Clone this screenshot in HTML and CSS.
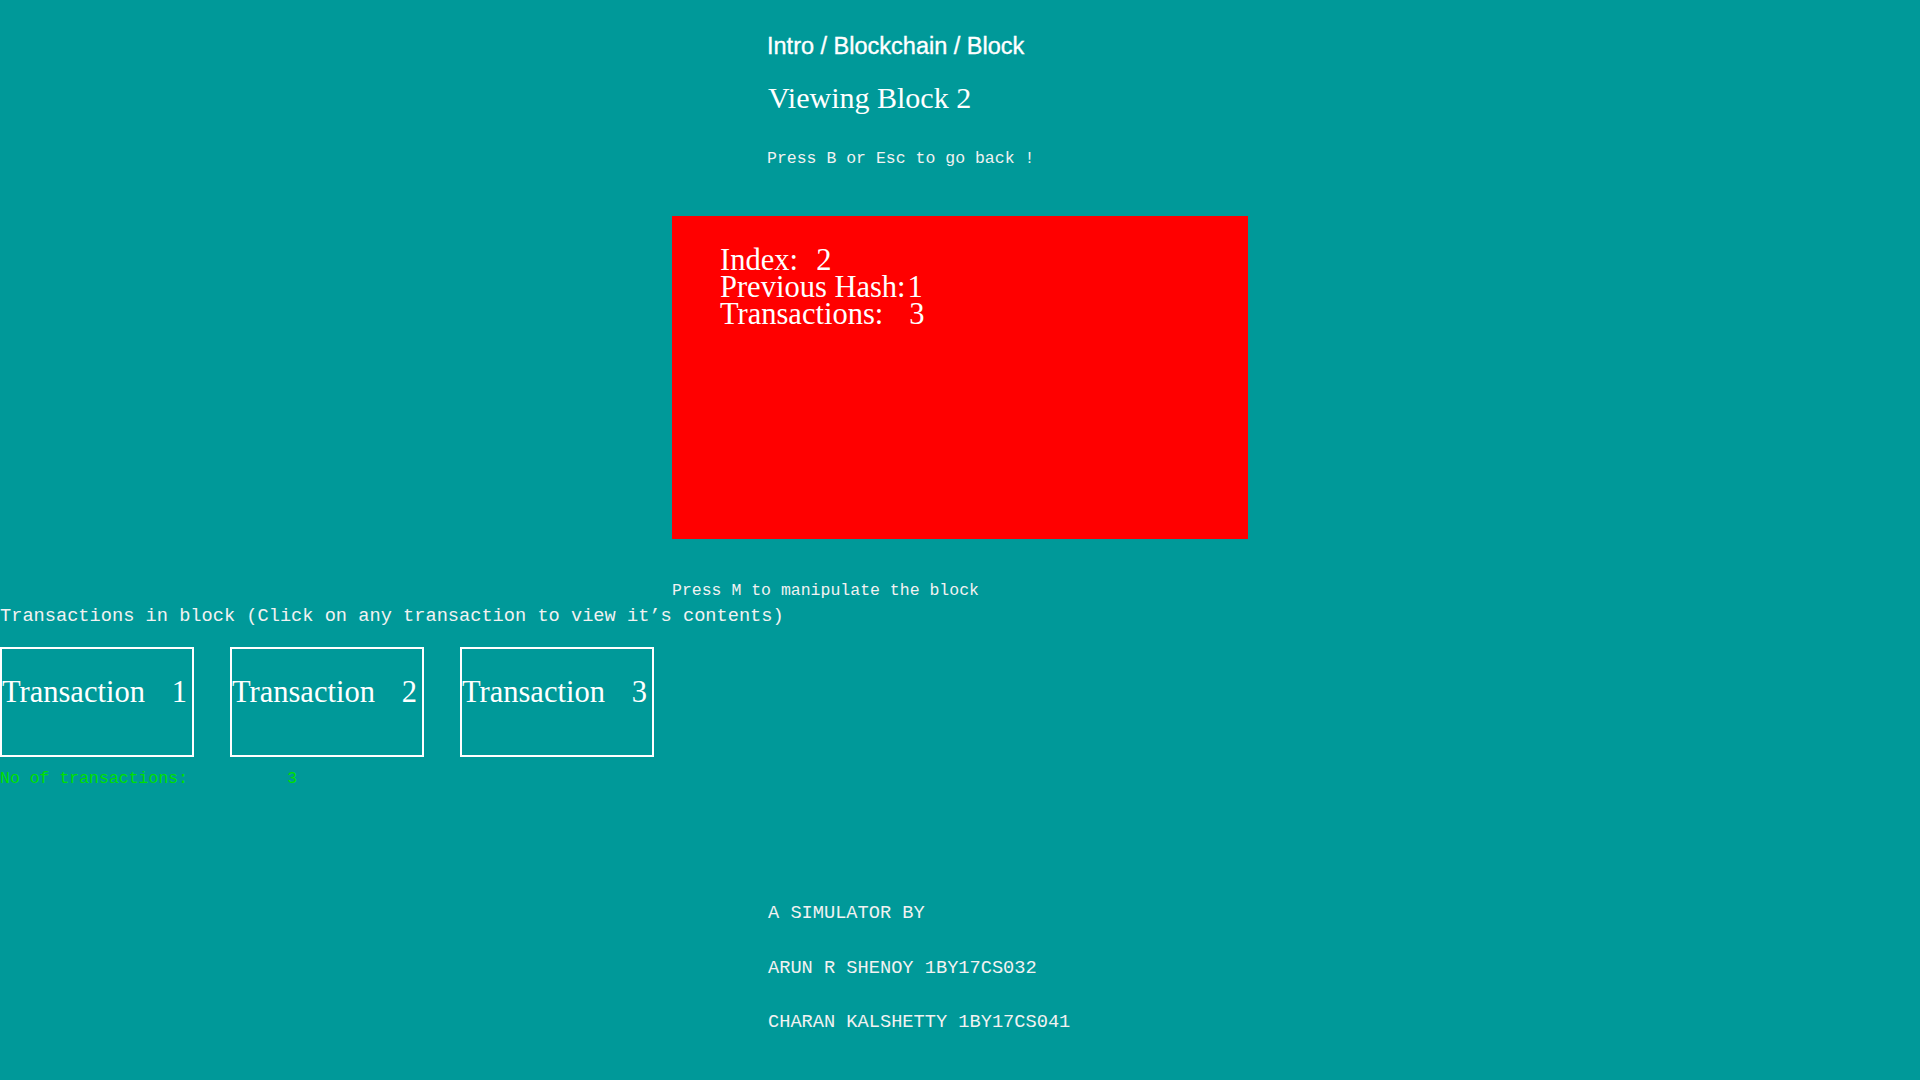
FILE: index.html
```html
<!DOCTYPE html>
<html lang="en">
<head>
<meta charset="utf-8">
<title>Viewing Block 2</title>
<link rel="stylesheet" href="styles.css">
</head>
<body>
<div class="screen">
  <header class="top">
    <div class="crumbs">Intro / Blockchain / Block</div>
    <h1 class="title">Viewing Block 2</h1>
    <p class="hint">Press B or Esc to go back !</p>
  </header>

  <section class="block-wrap">
    <div class="block-card">
      <div class="block-line">Index:  <span class="val-gap">2</span></div>
      <div class="block-line">Previous Hash:<span class="val-hash">1</span></div>
      <div class="block-line">Transactions:   <span class="val-gap">3</span></div>
    </div>
    <p class="hint manip">Press M to manipulate the block</p>
  </section>

  <p class="big-mono tx-caption">Transactions in block (Click on any transaction to view it’s contents)</p>

  <div class="tx-row">
    <div class="tx-box"><span>Transaction</span><span>1</span></div>
    <div class="tx-box"><span>Transaction</span><span>2</span></div>
    <div class="tx-box"><span>Transaction</span><span>3</span></div>
  </div>

  <p class="hint count">No of transactions:          3</p>

  <footer class="credits">
    <p class="big-mono credit first">A SIMULATOR BY</p>
    <p class="big-mono credit">ARUN R SHENOY 1BY17CS032</p>
    <p class="big-mono credit">CHARAN KALSHETTY 1BY17CS041</p>
  </footer>
</div>
</body>
</html>
```

FILE: styles.css
```css
html, body {
  margin: 0;
  padding: 0;
  background: #009999;
}

.screen {
  width: 1920px;
  height: 1080px;
  overflow: hidden;
  color: #ffffff;
}

p, h1 {
  margin: 0;
}

.top {
  padding-top: 31px;
  padding-left: 767px;
}

.crumbs {
  font-family: "Liberation Sans", Arial, sans-serif;
  font-size: 23.5px;
  line-height: 30px;
  color: #ffffff;
  -webkit-text-stroke: 0.35px #ffffff;
}

.title {
  margin-top: 19px;
  font-family: "Liberation Serif", "Times New Roman", serif;
  font-weight: normal;
  font-size: 30px;
  line-height: 36px;
  padding-left: 1px;
}

.hint {
  font-family: "Liberation Mono", "Courier New", monospace;
  font-size: 16.5px;
  line-height: 20px;
  color: #f2f2f2;
  white-space: pre;
}

.top .hint {
  margin-top: 33px;
}

.block-wrap {
  margin-top: 47px;
  padding-left: 672px;
}

.block-card {
  width: 576px;
  height: 323px;
  box-sizing: border-box;
  background: #ff0000;
  padding: 31px 0 0 48px;
}

.block-line {
  font-family: "Liberation Serif", "Times New Roman", serif;
  font-size: 30.5px;
  line-height: 27px;
  white-space: pre;
  color: #ffffff;
}

.val-gap {
  margin-left: 3px;
}

.val-hash {
  margin-left: 2px;
}

.manip {
  margin-top: 42px;
}

.big-mono {
  font-family: "Liberation Mono", "Courier New", monospace;
  font-size: 18.67px;
  line-height: 22px;
  color: #f2f2f2;
  white-space: pre;
}

.tx-caption {
  margin-top: 4px;
}

.tx-row {
  margin-top: 20px;
  display: flex;
  gap: 36px;
}

.tx-box {
  width: 194px;
  height: 110px;
  box-sizing: border-box;
  border: 2px solid #ffffff;
  padding: 25px 5px 0 0;
  display: flex;
  justify-content: space-between;
  align-items: flex-start;
  font-family: "Liberation Serif", "Times New Roman", serif;
  font-size: 30.5px;
  line-height: 36px;
  color: #ffffff;
}

.count {
  margin-top: 12px;
  color: #00e000;
}

.credits {
  margin-top: 113px;
  padding-left: 768px;
}

.credit {
  margin-top: 32.5px;
}

.credit.first {
  margin-top: 0;
}
```
